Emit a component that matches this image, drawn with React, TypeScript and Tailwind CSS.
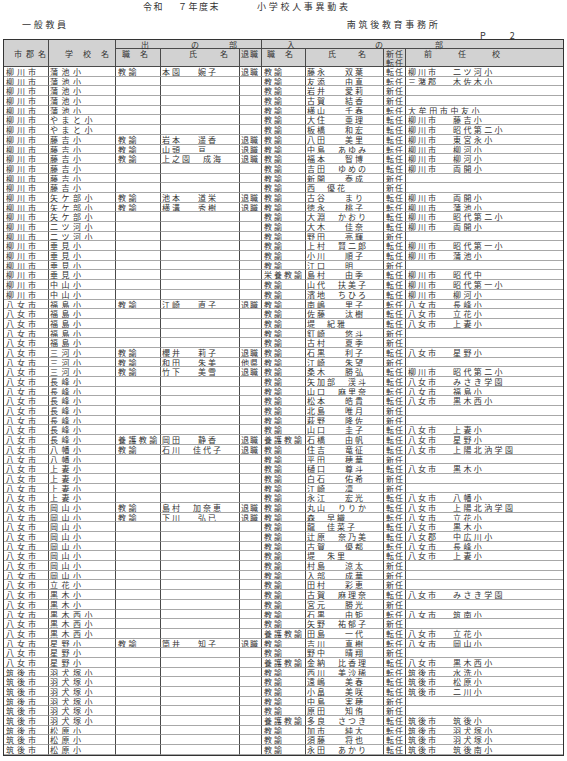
import React from "react";

const rows: string[] = [
  "柳川市|蒲池小|教諭|本園 婉子|退職|教諭|藤永 双葉|転任|柳川市 二ツ河小",
  "柳川市|蒲池小||||教諭|友添 由真|転任|三潴郡 木佐木小",
  "柳川市|蒲池小||||教諭|岩井 愛莉|新任|",
  "柳川市|蒲池小||||教諭|古賀 結香|新任|",
  "柳川市|蒲池小||||教諭|横山 千春|転任|大牟田市中友小",
  "柳川市|やまと小||||教諭|大住 亜理|転任|柳川市 藤吉小",
  "柳川市|やまと小||||教諭|板橋 和宏|転任|柳川市 昭代第二小",
  "柳川市|藤吉小|教諭|岩本 遥香|退職|教諭|八田 美里|転任|柳川市 東宮永小",
  "柳川市|藤吉小|教諭|山頭 亘|退職|教諭|中島 あゆみ|転任|柳川市 柳河小",
  "柳川市|藤吉小|教諭|上之園 成海|退職|教諭|福本 智博|転任|柳川市 柳河小",
  "柳川市|藤吉小||||教諭|吉田 ゆめの|転任|柳川市 両開小",
  "柳川市|藤吉小||||教諭|新開 泰成|新任|",
  "柳川市|藤吉小||||教諭|西 優花|新任|",
  "柳川市|矢ケ部小|教諭|池本 道栄|退職|教諭|古谷 まり|転任|柳川市 両開小",
  "柳川市|矢ケ部小|教諭|横溝 秀樹|退職|教諭|徳永 桃子|転任|柳川市 蒲池小",
  "柳川市|矢ケ部小||||教諭|大淵 かおり|転任|柳川市 昭代第二小",
  "柳川市|二ツ河小||||教諭|大木 佳奈|転任|柳川市 両開小",
  "柳川市|二ツ河小||||教諭|野田 亮輝|新任|",
  "柳川市|垂見小||||教諭|上村 賢二郎|転任|柳川市 昭代第一小",
  "柳川市|垂見小||||教諭|小川 順子|転任|柳川市 蒲池小",
  "柳川市|垂見小||||教諭|江口 明|新任|",
  "柳川市|垂見小||||栄養教諭|島村 由季|転任|柳川市 昭代中",
  "柳川市|中山小||||教諭|山代 扶美子|転任|柳川市 昭代第一小",
  "柳川市|中山小||||教諭|濱地 ちひろ|転任|柳川市 柳河小",
  "八女市|福島小|教諭|江崎 直子|退職|教諭|南嶋 里子|転任|八女市 長峰小",
  "八女市|福島小||||教諭|佐藤 汰樹|転任|八女市 立花小",
  "八女市|福島小||||教諭|堤 紀雅|転任|八女市 上妻小",
  "八女市|福島小||||教諭|釘崎 悠斗|新任|",
  "八女市|福島小||||教諭|古村 夏季|新任|",
  "八女市|三河小|教諭|櫻井 莉子|退職|教諭|石黒 利子|転任|八女市 星野小",
  "八女市|三河小|教諭|和田 朱美|他県|教諭|江崎 朱望|新任|",
  "八女市|三河小|教諭|竹下 美雪|退職|教諭|桑木 勝弘|転任|柳川市 昭代第二小",
  "八女市|長峰小||||教諭|矢加部 渓斗|転任|八女市 みさき学園",
  "八女市|長峰小||||教諭|山口 麻里奈|転任|八女市 福島小",
  "八女市|長峰小||||教諭|松本 皓貴|転任|八女市 黒木西小",
  "八女市|長峰小||||教諭|北島 唯月|新任|",
  "八女市|長峰小||||教諭|萩野 隆佐|新任|",
  "八女市|長峰小||||教諭|山口 圭子|転任|八女市 上妻小",
  "八女市|長峰小|養護教諭|岡田 静香|退職|養護教諭|石橋 由帆|転任|八女市 星野小",
  "八女市|八幡小|教諭|石川 佳代子|退職|教諭|住吉 竜征|転任|八女市 上陽北汭学園",
  "八女市|八幡小||||教諭|平田 穂華|新任|",
  "八女市|上妻小||||教諭|樋口 尊斗|転任|八女市 黒木小",
  "八女市|上妻小||||教諭|白石 佑希|新任|",
  "八女市|上妻小||||教諭|江崎 凛|新任|",
  "八女市|上妻小||||教諭|永江 宏光|転任|八女市 八幡小",
  "八女市|岡山小|教諭|島村 加奈恵|退職|教諭|丸山 りりか|転任|八女市 上陽北汭学園",
  "八女市|岡山小|教諭|下川 弘已|退職|教諭|森 早織|転任|八女市 立花小",
  "八女市|岡山小||||教諭|龍 佳菜子|転任|八女市 黒木小",
  "八女市|岡山小||||教諭|辻原 奈乃美|転任|八女郡 中広川小",
  "八女市|岡山小||||教諭|古賀 優都|転任|八女市 長峰小",
  "八女市|岡山小||||教諭|堤 朱里|転任|八女市 上妻小",
  "八女市|岡山小||||教諭|村島 涼太|新任|",
  "八女市|岡山小||||教諭|入部 成華|新任|",
  "八女市|立花小||||教諭|田村 彩恵|新任|",
  "八女市|黒木小||||教諭|古賀 麻理奈|転任|八女市 みさき学園",
  "八女市|黒木小||||教諭|宮元 勝光|新任|",
  "八女市|黒木西小||||教諭|石黒 由矩|転任|八女市 筑南小",
  "八女市|黒木西小||||教諭|矢野 祐郁子|新任|",
  "八女市|黒木西小||||養護教諭|田島 一代|転任|八女市 立花小",
  "八女市|星野小|教諭|筒井 知子|退職|教諭|吉川 真樹|転任|八女市 岡山小",
  "八女市|星野小||||教諭|野中 晴翔|新任|",
  "八女市|星野小||||養護教諭|金納 比香理|転任|八女市 黒木西小",
  "筑後市|羽犬塚小||||教諭|西川 美沙稀|転任|筑後市 水洗小",
  "筑後市|羽犬塚小||||教諭|遠嶋 美春|転任|筑後市 松原小",
  "筑後市|羽犬塚小||||教諭|小畠 美咲|転任|筑後市 二川小",
  "筑後市|羽犬塚小||||教諭|中島 実穂|新任|",
  "筑後市|羽犬塚小||||教諭|原田 知侑|新任|",
  "筑後市|羽犬塚小||||養護教諭|多良 さつき|転任|筑後市 筑後小",
  "筑後市|松原小||||教諭|加市 純大|転任|筑後市 羽犬塚小",
  "筑後市|松原小||||教諭|須藤 将也|転任|筑後市 羽犬塚小",
  "筑後市|松原小||||教諭|永田 あかり|転任|筑後市 筑後南小",
];

// width of the surname box, picked from surname / given-name length
const outSlot: Record<string, string> = {
  one: "w-[20px]",
  short: "w-[31px]",
  two: "w-[36px]",
  three: "w-[41px]",
};
const inSlot: Record<string, string> = {
  one: "w-[20px]",
  short: "w-[31px]",
  two: "w-[38px]",
  three: "w-[41px]",
};

const cell = "h-[9.7px] leading-[9.7px] border-r border-b border-r-[#4a4a4a] border-b-[#a8a8a8] overflow-hidden whitespace-nowrap";
const line = "border-[#4a4a4a]";

function Name({ v, slots }: { v: string; slots: Record<string, string> }) {
  if (!v) return null;
  const [s, g] = v.split(" ");
  const key = s.length === 1 ? "one" : s.length >= 3 ? "three" : g.length >= 3 ? "short" : "two";
  return (
    <div className="flex pl-[1px]">
      <span className={`${slots[key]} shrink-0 tracking-[2px]`}>{s}</span>
      <span className="tracking-[2px]">{g}</span>
    </div>
  );
}

function Prev({ v }: { v: string }) {
  if (!v) return null;
  if (!v.includes(" ")) return <span className="pl-[2px] tracking-[2.6px]">{v}</span>;
  const [city, school] = v.split(" ");
  return (
    <div className="flex pl-[2px]">
      <span className="w-[45px] shrink-0 tracking-[2px]">{city}</span>
      <span className="tracking-[2.4px]">{school}</span>
    </div>
  );
}

function Row({ row }: { row: string }) {
  const [city, school, outTitle, outName, reason, inTitle, inName, kind, prev] = row.split("|");
  return (
    <div className="flex">
      <div className={`${cell} w-[45px] pl-[2px] tracking-[3px]`}>{city}</div>
      <div className={`${cell} w-[67px] pl-[1px] tracking-[3.5px]`}>{school}</div>
      <div className={`${cell} w-[45px] pl-[2px] tracking-[2.4px]`}>{outTitle}</div>
      <div className={`${cell} w-[79px]`}><Name v={outName} slots={outSlot} /></div>
      <div className={`${cell} w-[22px] pl-[1px] tracking-[1px]`}>{reason}</div>
      <div className={`${cell} w-[44px] pl-[2px] tracking-[2px]`}>{inTitle}</div>
      <div className={`${cell} w-[78px]`}><Name v={inName} slots={inSlot} /></div>
      <div className={`${cell} w-[22px] pl-[2px] tracking-[1px]`}>{kind}</div>
      <div className="h-[9.7px] leading-[9.7px] w-[157px] border-b border-b-[#a8a8a8] overflow-hidden whitespace-nowrap"><Prev v={prev} /></div>
    </div>
  );
}

export default function App() {
  return (
    <div className="w-[567px] h-[761px] bg-white text-[#333] text-[8px] font-['Noto_Sans_CJK_JP',sans-serif]">
      <div className="h-[13px] flex items-center pl-[143px] text-[9px] whitespace-nowrap">
        <span className="tracking-[1.5px]">令和</span>
        <span className="ml-[14px] tracking-[1.5px]">７年度末</span>
        <span className="ml-[37px] tracking-[2.7px]">小学校人事異動表</span>
      </div>
      <div className="mt-[5px] h-[14px] flex items-center text-[9px] whitespace-nowrap">
        <span className="pl-[22px] tracking-[2.7px]">一般教員</span>
        <span className="ml-[278px] tracking-[2.7px]">南筑後教育事務所</span>
      </div>
      <div className="h-[7px] flex items-center text-[9px] leading-[7px]">
        <span className="ml-[480px]">P</span>
        <span className="ml-[24px]">2</span>
      </div>

      <div className="ml-[3px] w-[561px] border border-[#333]">
        <div className={`flex h-[27px] bg-[#d2d2d2] border-b ${line} leading-[9px] whitespace-nowrap`}>
          <div className={`w-[45px] border-r ${line} pt-[9px] pl-[10px] flex gap-[4px]`}>
            <span>市</span><span>郡</span><span>名</span>
          </div>
          <div className={`w-[67px] border-r ${line} pt-[9px] pl-[16px] flex gap-[10px]`}>
            <span>学</span><span>校</span><span>名</span>
          </div>
          <div className={`w-[146px] border-r ${line} flex flex-col`}>
            <div className={`h-[9px] border-b ${line} flex`}>
              <span className="ml-[25px]">出</span>
              <span className="ml-[42px]">の</span>
              <span className="ml-[30px]">部</span>
            </div>
            <div className="flex-1 flex">
              <div className={`w-[45px] border-r ${line} pl-[6px] flex gap-[10px]`}>
                <span>職</span><span>名</span>
              </div>
              <div className={`w-[79px] border-r ${line} pl-[28px] flex gap-[23px]`}>
                <span>氏</span><span>名</span>
              </div>
              <div className="w-[21px] pl-[1px] flex gap-[1px]">
                <span>退</span><span>職</span>
              </div>
            </div>
          </div>
          <div className="w-[301px] flex flex-col">
            <div className={`h-[9px] border-b ${line} flex`}>
              <span className="ml-[25px]">入</span>
              <span className="ml-[80px]">の</span>
              <span className="ml-[52px]">部</span>
            </div>
            <div className="flex-1 flex">
              <div className={`w-[44px] border-r ${line} pl-[5px] flex gap-[10px]`}>
                <span>職</span><span>名</span>
              </div>
              <div className={`w-[78px] border-r ${line} pl-[22px] flex gap-[22px]`}>
                <span>氏</span><span>名</span>
              </div>
              <div className={`w-[22px] border-r ${line} pl-[2px] flex flex-col`}>
                <div className="flex gap-[1px]"><span>新</span><span>任</span></div>
                <div className="flex gap-[1px]"><span>転</span><span>任</span></div>
              </div>
              <div className="w-[157px] pl-[18px] flex gap-[26px]">
                <span>前</span><span>任</span><span>校</span>
              </div>
            </div>
          </div>
        </div>
        {rows.map((row, i) => (
          <Row key={i} row={row} />
        ))}
      </div>
    </div>
  );
}
